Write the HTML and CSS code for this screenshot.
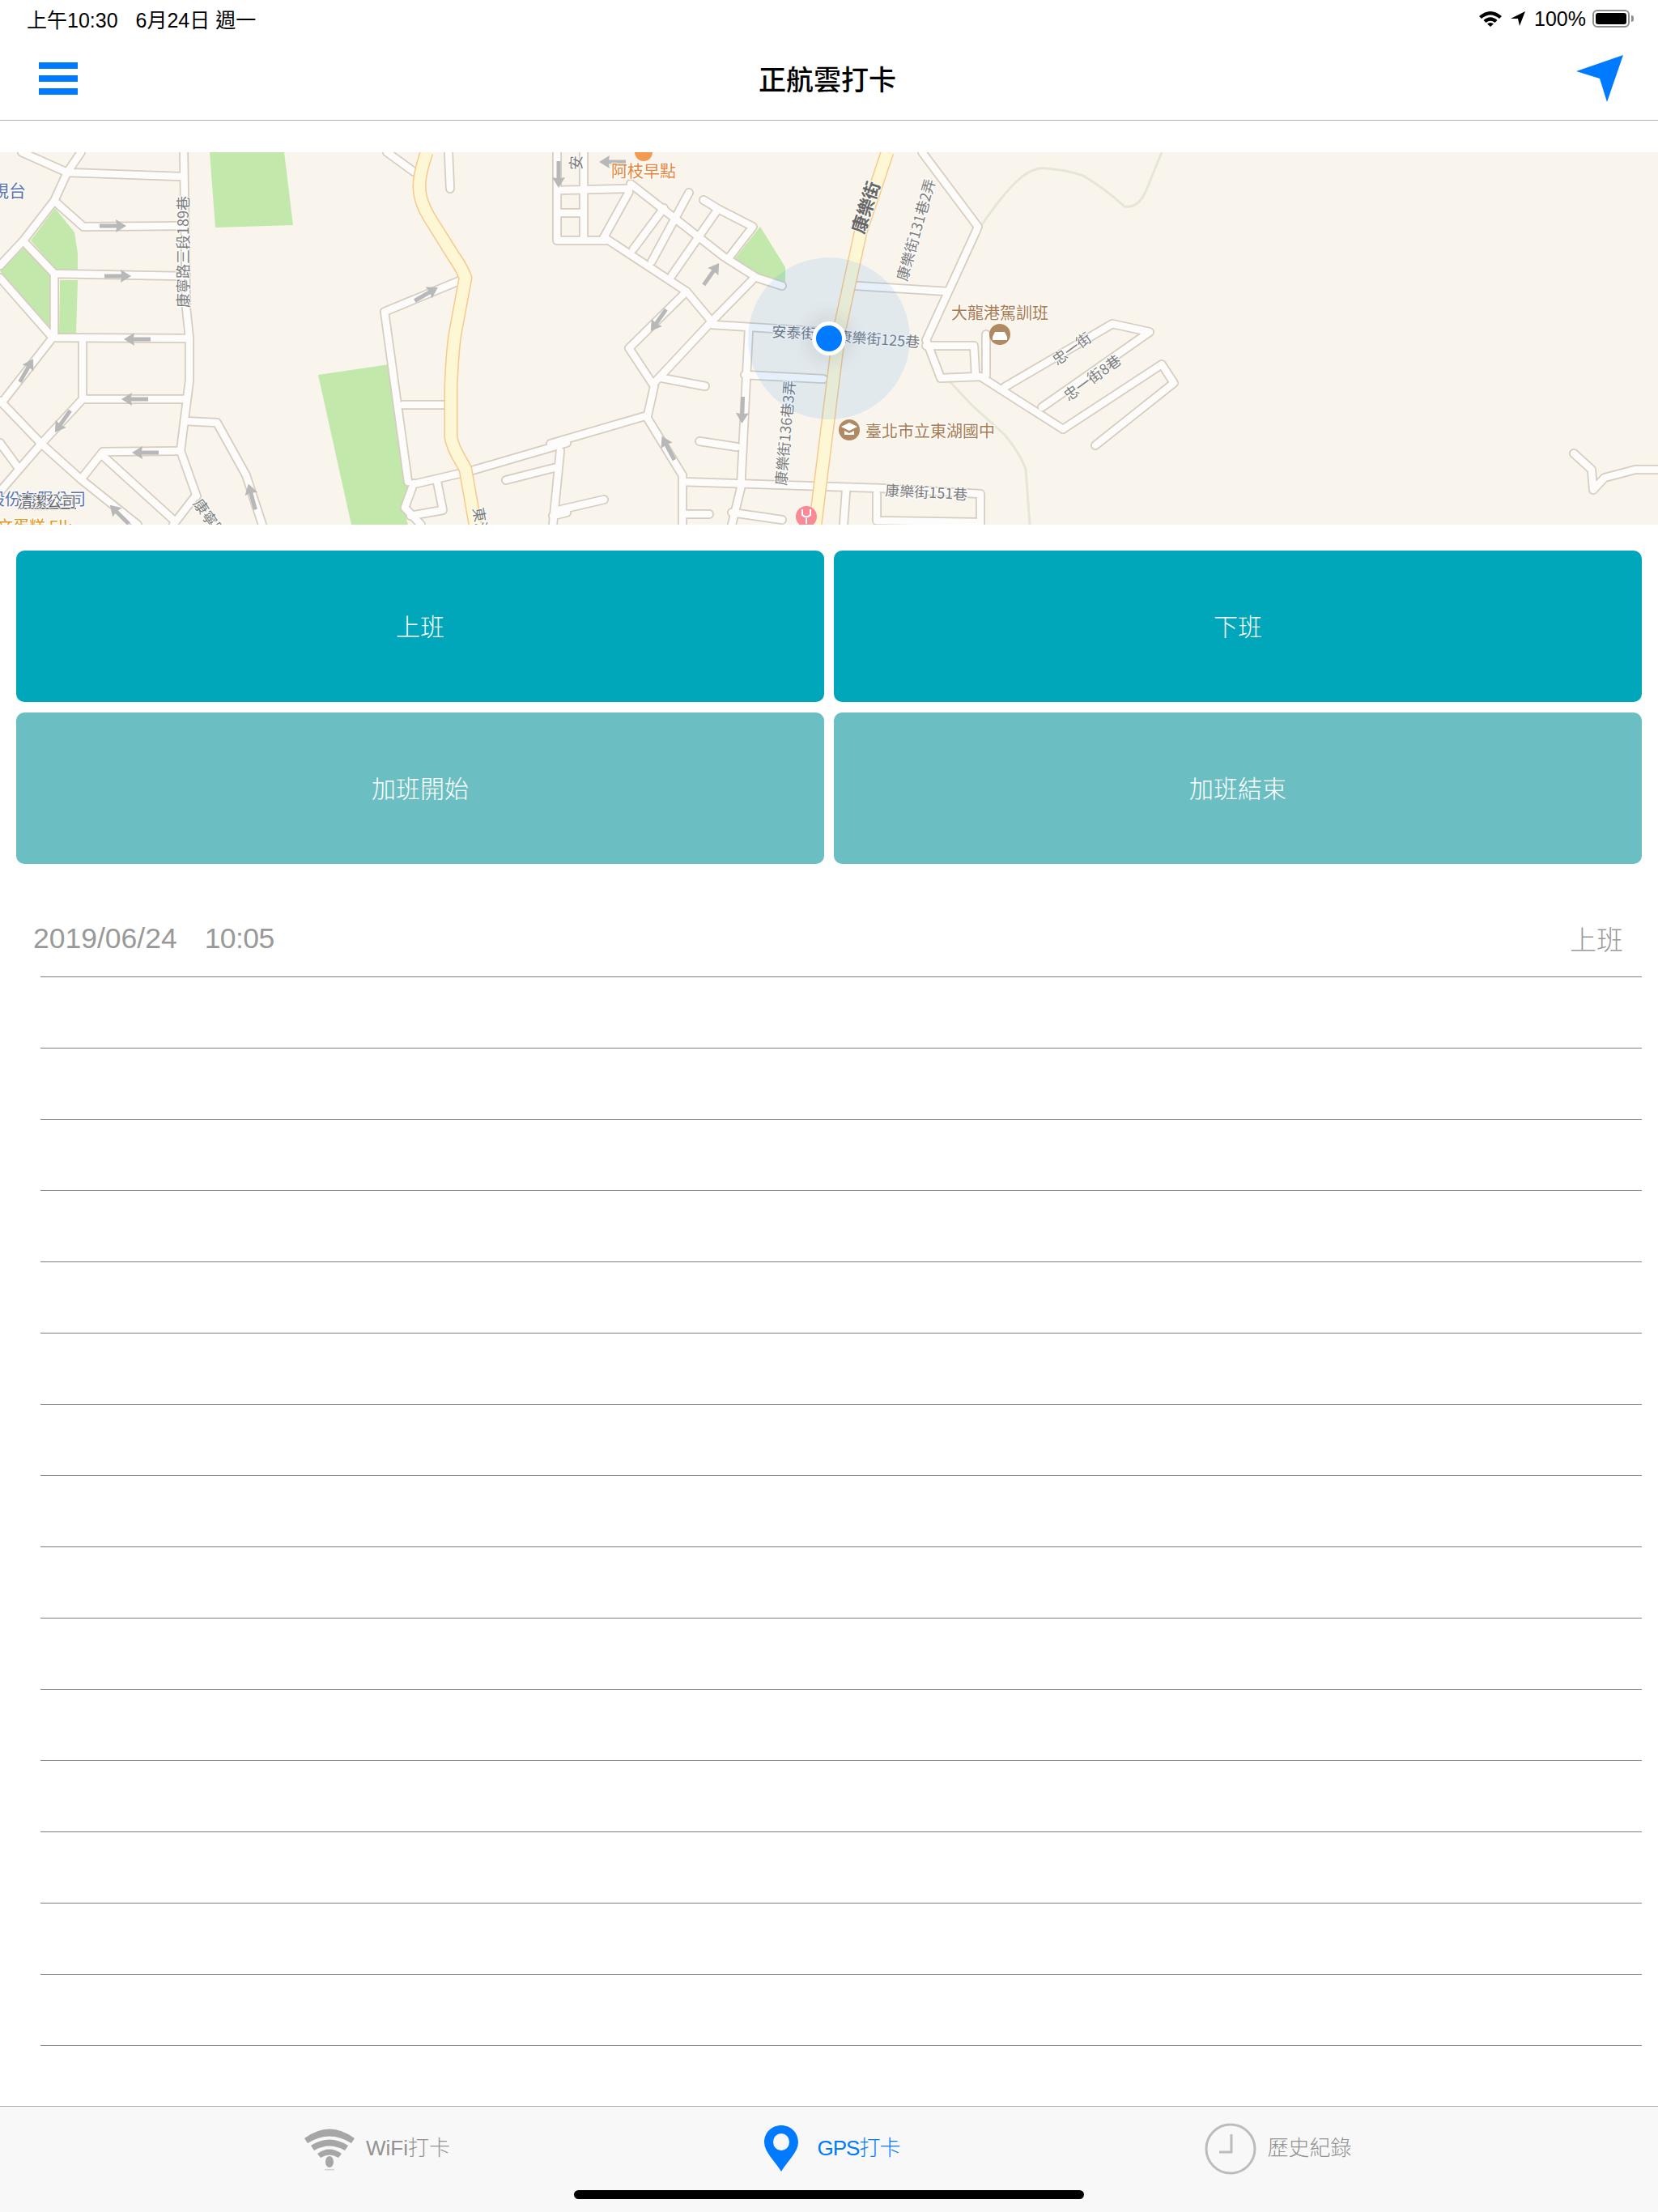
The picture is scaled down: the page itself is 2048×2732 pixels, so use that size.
FILE: index.html
```html
<!DOCTYPE html>
<html lang="zh-Hant">
<head>
<meta charset="utf-8">
<title>正航雲打卡</title>
<link rel="stylesheet" href="styles.css">
</head>
<body>
<div class="app">
  <div class="status">
    <div class="status-left"><span>上午10:30</span><span>6月24日 週一</span></div>
    <div class="status-right">
      <svg class="st-wifi" viewBox="0 0 28 20" width="28" height="20"><path d="M0 7 Q14 -5 28 7 L25 10 Q14 1 3 10Z"/><path d="M5.500 12 Q14 4.500 22.500 12 L19.500 15 Q14 10.500 8.500 15Z"/><path d="M10 16.500 Q14 13.500 18 16.500 L14 20Z"/></svg>
      <svg class="st-arrow" viewBox="0 0 18 18" width="18" height="18"><path d="M0 9 L18 0 L11 18 L9 9Z"/></svg>
      <span class="st-pct">100%</span>
      <span class="battery"><span class="battery-fill"></span></span>
      <span class="battery-nub"></span>
    </div>
  </div>

  <header class="nav">
    <div class="hamburger"><span></span><span></span><span></span></div>
    <h1 class="nav-title">正航雲打卡</h1>
    <svg class="nav-arrow" viewBox="0 0 58 58" width="58" height="58"><path d="M0 20 L58 0 L38 58 L29 29Z"/></svg>
  </header>

  <svg class="map" viewBox="0 0 2048 460" width="2048" height="460">
    <defs>
      <g id="roads">
        <path d="M227 0 L228 59 L230 192 L234 230 L234 282 L228 329 L223 369 L243 425 M241 425 L214 460"/>
        <path d="M27 0 L83 25 L223 30 M100 0 L83 25 L67 60 L29 109 L0 140"/>
        <path d="M67 60 L103 92 L223 91 M31 112 L67 150 L225 153 M67 150 L67 229 M0 155 L65 229 L234 230"/>
        <path d="M102 229 L102 305 L228 305 M65 229 L4 307 M102 305 L51 360 L0 419 M0 307 L51 360 L100 404 L170 460 M0 359 L22 389"/>
        <path d="M100 404 L127 370 L221 369 M127 375 L214 454 M228 332 L268 334 L304 399 L324 460"/>
        <path d="M478 0 L511 24 M554 0 L556 45"/>
        <path d="M567 159 L475 197 L504 407 M511 409 L500 439 L520 460 M498 312 L549 312"/>
        <path d="M700 359 L580 394 L511 410 M540 407 L547 442 L507 449 M692 369 L683 460 M625 405 L688 389 M700 445 L683 449"/>
        <path d="M688 0 L688 109 L749 109 M721 0 L721 105 M688 47 L777 45 M688 75 L718 75"/>
        <path d="M779 39 L894 129 L935 155 L966 165 M746 105 L848 172 L879 209"/>
        <path d="M746 105 L777 49 M782 120 L820 69 M805 135 L851 50 M830 152 L887 70 M869 59 L887 70 L930 92 L899 132"/>
        <path d="M930 157 L879 209 L808 285 M848 172 L777 242 L808 289 L800 325 L680 360"/>
        <path d="M879 213 L1022 222 M925 219 L915 415 L904 460 M920 275 L1017 280 M818 279 L871 289 M864 357 L910 364"/>
        <path d="M800 329 L843 399 L843 460 M843 407 L1088 415 L1211 422 L1211 460 M690 442 L746 429 M843 447 L876 447 M904 445 L966 454"/>
        <path d="M1045 419 L1042 460 M1083 422 L1083 455 L1205 457 M1058 165 L1170 172"/>
        <path d="M1139 0 L1208 92 L1205 99 L1144 232 L1162 279 L1211 277 L1313 342 M1144 239 L1203 239 L1205 275 M1218 225 L1218 275"/>
        <path d="M1241 290 L1374 212 L1420 222 L1287 315 M1313 342 L1435 262 L1450 285 L1353 362"/>
        <path d="M1944 372 L1966 392 L1968 417 L1982 402 L2020 392 L2048 392"/>
      </g>
      <g id="mainroad">
        <path d="M527 0 C522 15 518 28 518 42 C518 58 524 70 530 80 L560 128 C570 142 573 150 575 155 L562 225 C559 245 558 265 557 290 L557 352 C560 370 570 380 575 392 L587 460"/>
        <path d="M1096 0 L1063 99 L1037 219 L1007 460"/>
      </g>
      <path id="arr" d="M-16 0 L-3 -8 L-4 -2.500 L17 -2.500 L17 2.500 L-4 2.500 L-3 8Z"/>
    </defs>

    <rect class="land" width="2048" height="460"/>

    <path class="park" d="M259 0 L351 0 L362 90 L266 93Z"/>
    <path class="park" d="M68 69 L92 99 L96 125 L96 147 L71 147 L38 109Z"/>
    <path class="park" d="M30 117 L65 154 L64 219 L0 147Z"/>
    <path class="park" d="M74 158 L96 158 L94 224 L73 224Z"/>
    <path class="park" d="M393 275 L481 262 L507 409 L498 439 L504 460 L434 460Z"/>
    <path class="park" d="M939 92 L970 142 L970 164 L935 152 L907 132Z"/>

    <path class="trail" d="M1211 92 Q1240 50 1257 35 Q1275 18 1292 20 Q1318 22 1338 29 Q1365 45 1389 67 Q1405 70 1415 49 L1435 0"/>
    <path class="trail" d="M1172 282 L1200 312 L1241 349 Q1262 375 1267 392 L1272 460"/>

    <use href="#roads" class="road-case"/>
    <use href="#roads" class="road-fill"/>
    <use href="#mainroad" class="main-case"/>
    <use href="#mainroad" class="main-fill"/>

    <g class="arrows">
      <use href="#arr" transform="translate(140 91) rotate(180)"/>
      <use href="#arr" transform="translate(146 153) rotate(180)"/>
      <use href="#arr" transform="translate(169 231)"/>
      <use href="#arr" transform="translate(166 305)"/>
      <use href="#arr" transform="translate(179 371)"/>
      <use href="#arr" transform="translate(33 269) rotate(120)"/>
      <use href="#arr" transform="translate(77 333) rotate(-55)"/>
      <use href="#arr" transform="translate(527 175) rotate(150)"/>
      <use href="#arr" transform="translate(147 447) rotate(45)"/>
      <use href="#arr" transform="translate(311 425) rotate(75)"/>
      <use href="#arr" transform="translate(690 28) rotate(-90)"/>
      <use href="#arr" transform="translate(756 12)"/>
      <use href="#arr" transform="translate(879 150) rotate(125)"/>
      <use href="#arr" transform="translate(813 208) rotate(-55)"/>
      <use href="#arr" transform="translate(917 319) rotate(-88)"/>
      <use href="#arr" transform="translate(825 365) rotate(62)"/>
    </g>

    <circle class="poi-orange" cx="795" cy="0" r="11"/>
    <circle class="poi-brown" cx="1235" cy="225" r="13"/>
    <path class="poi-glyph" d="M1226 228 L1229 222 L1241 222 L1244 228 L1244 232 L1226 232Z"/>
    <circle class="poi-brown" cx="1049" cy="343" r="13"/>
    <path class="poi-glyph" d="M1039 339 L1049 334 L1059 339 L1049 344Z M1043 344 L1049 347 L1055 344 L1055 349 L1043 349Z"/>
    <circle class="poi-pink" cx="996" cy="450" r="13"/>
    <path class="poi-pink-line" d="M991 441 L991 448 Q996 453 1001 448 L1001 441 M996 452 L996 459"/>

    <text class="lbl lbl-blue lbl-big" x="-10" y="55">視台</text>
    <text class="lbl lbl-blue" x="-14" y="436">股份有限公司</text>
    <text class="lbl lbl-dark" x="22" y="438">清潔公司</text>
    <text class="lbl lbl-yellow" x="-4" y="470">文蛋糕 Elk</text>
    <text class="lbl lbl-orange" x="755" y="31">阿枝早點</text>
    <text class="lbl lbl-brown" x="1175" y="206">大龍港駕訓班</text>
    <text class="lbl lbl-brown" x="1069" y="352">臺北市立東湖國中</text>
    <text class="rd" transform="translate(233 192) rotate(-90)">康寧路三段189巷</text>
    <text class="rd" transform="translate(718 22) rotate(-90)">安</text>
    <text class="rd rd-bold" transform="translate(1067 102) rotate(-72)">康樂街</text>
    <text class="rd" transform="translate(1120 160) rotate(-74)">康樂街131巷2弄</text>
    <text class="rd" transform="translate(953 228) rotate(3)">安泰街</text>
    <text class="rd" transform="translate(1034 234) rotate(4)">康樂街125巷</text>
    <text class="rd" transform="translate(1306 264) rotate(-36)">忠一街</text>
    <text class="rd" transform="translate(1320 308) rotate(-36)">忠一街8巷</text>
    <text class="rd" transform="translate(971 412) rotate(-85)">康樂街136巷3弄</text>
    <text class="rd" transform="translate(1093 424) rotate(3)">康樂街151巷</text>
    <text class="rd" transform="translate(238 434) rotate(55)">康寧路</text>
    <text class="rd" transform="translate(584 440) rotate(80)">東湖路</text>

    <circle class="accuracy" cx="1024" cy="230" r="100"/>
    <circle class="dot-shadow" cx="1024" cy="230" r="32"/>
    <circle class="dot-white" cx="1024" cy="230" r="21"/>
    <circle class="dot-blue" cx="1024" cy="230" r="16"/>
  </svg>

  <section class="buttons">
    <button class="btn btn-main">上班</button>
    <button class="btn btn-main">下班</button>
    <button class="btn btn-ot">加班開始</button>
    <button class="btn btn-ot">加班結束</button>
  </section>

  <ul class="list">
    <li class="row"><span class="row-date"><span>2019/06/24</span><span class="row-time">10:05</span></span><span class="row-type">上班</span></li>
    <li class="row"></li><li class="row"></li><li class="row"></li><li class="row"></li>
    <li class="row"></li><li class="row"></li><li class="row"></li><li class="row"></li>
    <li class="row"></li><li class="row"></li><li class="row"></li><li class="row"></li>
    <li class="row"></li><li class="row"></li><li class="row"></li>
  </ul>

  <footer class="tabbar">
    <div class="tabs">
      <div class="tab">
        <svg class="tab-wifi" viewBox="0 0 62 54" width="62" height="54">
          <path d="M0 14 Q31 -9 62 14 L58 20 Q31 3 4 20Z"/>
          <path d="M8 23 Q31 8 54 23 L50 29 Q31 18 12 29Z"/>
          <path d="M16 33 Q31 22 46 33 L42 38 Q31 31 20 38Z"/>
          <ellipse cx="31" cy="43" rx="5" ry="7"/>
          <rect class="tab-wifi-shadow" x="25" y="52" width="12" height="1.500"/>
        </svg>
        <span class="tab-label">WiFi打卡</span>
      </div>
      <div class="tab tab-active">
        <svg class="tab-pin" viewBox="0 0 42 57" width="42" height="57"><path fill-rule="evenodd" d="M21 0 C9 0 0 9 0 21 C0 33 14 45 21 57 C28 45 42 33 42 21 C42 9 33 0 21 0Z M21 10 A10 10.500 0 1 1 21 31 A10 10.500 0 1 1 21 10Z"/></svg>
        <span class="tab-label">GPS打卡</span>
      </div>
      <div class="tab tab-history">
        <svg class="tab-clock" viewBox="0 0 64 64" width="64" height="64"><circle cx="32" cy="32" r="30"/><path d="M33 14 L33 36 L18 36"/></svg>
        <span class="tab-label">歷史紀錄</span>
      </div>
    </div>
    <div class="home-bar"></div>
  </footer>
</div>
</body>
</html>
```

FILE: styles.css
```css
* { box-sizing: border-box; }
html, body { margin: 0; padding: 0; background: #fff; }
body { font-family: "Liberation Sans", "Noto Sans CJK TC", sans-serif; }

.app { width: 2048px; height: 2732px; display: flex; flex-direction: column; overflow: hidden; }

/* status bar */
.status { height: 46px; flex: none; display: flex; justify-content: space-between; align-items: center; padding: 0 30px 0 33px; font-size: 25px; color: #000; }
.status-left { display: flex; gap: 22px; }
.status-right { display: flex; align-items: center; }
.st-wifi, .st-arrow { fill: #000; }
.st-arrow { margin-left: 11px; }
.st-pct { margin-left: 11px; }
.battery { margin-left: 8px; width: 46px; height: 22px; border: 2px solid #8e8e8e; border-radius: 6px; padding: 2px; display: block; }
.battery-fill { display: block; width: 100%; height: 100%; background: #000; border-radius: 3px; }
.battery-nub { width: 3px; height: 8px; margin-left: 2px; background: #8e8e8e; border-radius: 0 3px 3px 0; display: block; }

/* nav */
.nav { height: 103px; flex: none; display: grid; grid-template-columns: 1fr auto 1fr; align-items: center; padding: 0 43px 1px 48px; border-bottom: 1px solid #b2b2b2; }
.hamburger { width: 48px; display: flex; flex-direction: column; gap: 8px; }
.hamburger span { display: block; height: 8px; background: #007aff; }
.nav-title { margin: 0 9px 0 0; font-size: 34px; font-weight: 500; color: #000; line-height: 1; font-family: "Noto Sans CJK TC", sans-serif; }
.nav-arrow { justify-self: end; fill: #007aff; }

/* map */
.map { display: block; flex: none; margin-top: 39px; }
.land { fill: #f9f5ec; }
.park { fill: #c2e8ab; }
.trail { fill: none; stroke: #e7e5d6; stroke-width: 3; }
.road-case { fill: none; stroke: #d6cdc0; stroke-width: 12; stroke-linecap: round; stroke-linejoin: round; }
.road-fill { fill: none; stroke: #fdfcfb; stroke-width: 8.5; stroke-linecap: round; stroke-linejoin: round; }
.main-case { fill: none; stroke: #f7c98c; stroke-width: 17; stroke-linejoin: round; }
.main-fill { fill: none; stroke: #fdf7d5; stroke-width: 14; stroke-linejoin: round; }
.arrows { fill: #b8b8b8; }
.lbl, .rd { font-family: "Noto Sans CJK TC", sans-serif; paint-order: stroke; stroke: #fff; stroke-width: 2.5px; stroke-opacity: .75; }
.lbl { font-size: 20px; }
.lbl-big { font-size: 21px; }
.lbl-blue { fill: #5a74ad; }
.lbl-dark { fill: #666; font-size: 18px; text-decoration: underline; }
.lbl-yellow { fill: #e49a20; }
.lbl-orange { fill: #e8853a; }
.lbl-brown { fill: #a97b4f; }
.rd { font-size: 18px; fill: #7d7d7d; }
.rd-bold { font-size: 22px; font-weight: 700; fill: #666; }
.poi-orange { fill: #f29a4f; }
.poi-brown { fill: #b08a63; }
.poi-glyph { fill: #fff; }
.poi-pink { fill: #f98a95; }
.poi-pink-line { fill: none; stroke: #fff; stroke-width: 2; }
.accuracy { fill: #007aff; fill-opacity: .09; }
.dot-shadow { fill: #555; fill-opacity: .09; filter: blur(8px); }
.dot-white { fill: #fff; }
.dot-blue { fill: #007aff; }

/* buttons */
.buttons { flex: none; margin-top: 32px; padding: 0 20px; display: grid; grid-template-columns: 1fr 1fr; grid-auto-rows: 187px; gap: 13px 12px; }
.btn { border: 0; border-radius: 10px; color: #fff; font-family: "Noto Sans CJK TC", sans-serif; font-size: 30px; font-weight: 300; padding: 0 0 4px; }
.btn-main { background: #00a7bb; }
.btn-ot { background: #6bbfc3; }

/* list */
.list { list-style: none; margin: 52px 20px 0 50px; padding: 0; flex: none; }
.row { height: 88px; border-bottom: 1px solid #808080; display: flex; justify-content: space-between; align-items: center; padding: 0 23px 7px 0; color: #999; }
.row-date { margin-left: -9px; font-size: 35.5px; display: flex; gap: 34px; }
.row-time { letter-spacing: -.6px; }
.row-type { font-family: "Noto Sans CJK TC", sans-serif; font-size: 33px; font-weight: 300; }

/* tab bar */
.tabbar { margin-top: auto; height: 131px; flex: none; background: #f8f8f8; border-top: 1px solid #b2b2b2; display: flex; flex-direction: column; }
.tabs { height: 103px; flex: none; display: grid; grid-template-columns: repeat(3, 558px); justify-content: center; }
.tab { display: flex; align-items: center; justify-content: center; gap: 14px; color: #929292; }
.tab-label { font-size: 26px; font-weight: 300; margin-bottom: 6px; }
.tab-active { color: #007aff; gap: 24px; padding-left: 7px; }
.tab-active .tab-label { letter-spacing: -1px; }
.tab-history { gap: 13px; padding-right: 6px; }
.tab-wifi { fill: #a6a6a6; }
.tab-wifi-shadow { fill: #d4d4d4; }
.tab-pin { fill: #007aff; }
.tab-clock { fill: none; stroke: #bcbcbc; stroke-width: 3; }
.home-bar { width: 630px; height: 11px; margin: 0 auto; background: #000; border-radius: 6px; }
```
